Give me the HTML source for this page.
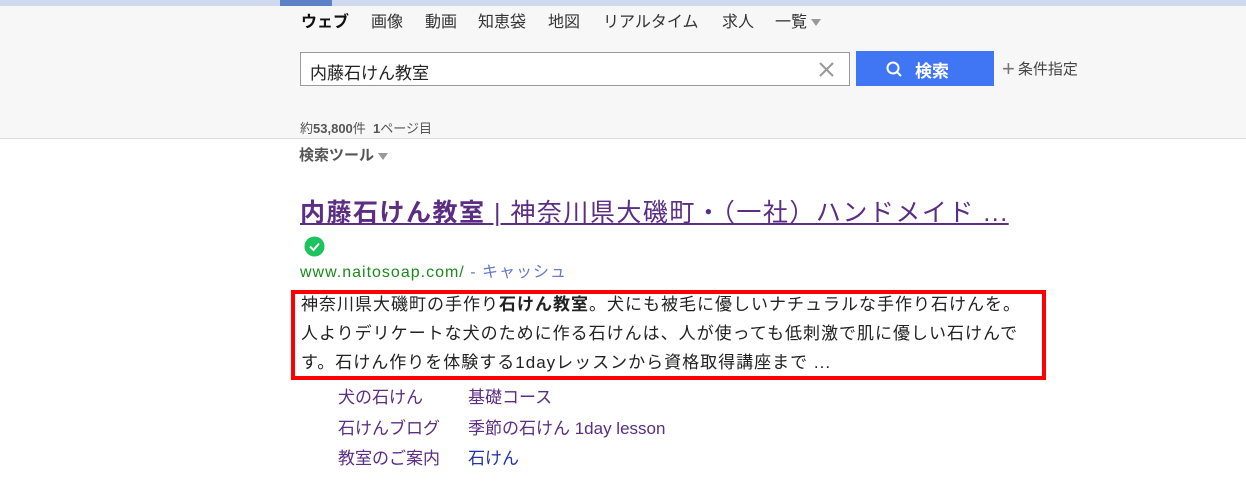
<!DOCTYPE html>
<html><head><meta charset="utf-8"><style>
*{margin:0;padding:0;box-sizing:border-box}
body{width:1246px;height:492px;background:#fff;font-family:"Liberation Sans","Noto Sans CJK JP",sans-serif;position:relative;overflow:hidden;color:#333}
.a{position:absolute;white-space:nowrap}
#top{position:absolute;left:0;top:0;width:1246px;height:6px;background:#cfdaee}
#top i{position:absolute;left:280px;top:0;width:52px;height:6px;background:#5d82c8}
#hd{position:absolute;left:0;top:6px;width:1246px;height:133px;background:#f7f7f7;border-bottom:1px solid #dcdcdc}
.nav{top:2px;font-size:16px;color:#333}
.tri{display:inline-block;width:0;height:0;border-left:5px solid transparent;border-right:5px solid transparent;border-top:7px solid #999;vertical-align:middle;margin-left:4px}
#box{position:absolute;left:300px;top:52px;width:550px;height:34px;border:1px solid #999;background:#fff}
#btn{position:absolute;left:856px;top:51px;width:138px;height:35px;background:#4076f4;color:#fff;font-weight:bold;font-size:17px}
a{color:#5b2d83}
</style></head><body>
<div id="top"><i></i></div>
<div id="hd">
<div class="a nav" style="left:301px;font-weight:bold;color:#111">ウェブ</div>
<div class="a nav" style="left:371px">画像</div>
<div class="a nav" style="left:425px">動画</div>
<div class="a nav" style="left:478px">知恵袋</div>
<div class="a nav" style="left:548px">地図</div>
<div class="a nav" style="left:603px">リアルタイム</div>
<div class="a nav" style="left:722px">求人</div>
<div class="a nav" style="left:775px">一覧<span class="tri"></span></div>
</div>
<div id="box"><div class="a" style="left:9px;top:6px;font-size:17px;color:#222">内藤石けん教室</div>
<svg class="a" style="left:518px;top:9px" width="15" height="15"><path d="M1 1L14 14M14 1L1 14" stroke="#999" stroke-width="2"/></svg></div>
<div id="btn"><svg class="a" style="left:30px;top:10px" width="16" height="16"><circle cx="7" cy="7" r="5.5" fill="none" stroke="#fff" stroke-width="2"/><path d="M11 11L15 15" stroke="#fff" stroke-width="2"/></svg><div class="a" style="left:59px;top:6px">検索</div></div>
<div class="a" style="left:1002px;top:56px;font-size:15px;color:#444"><span style="font-size:22px;color:#777;vertical-align:-2px;margin-right:3px">+</span>条件指定</div>
<div class="a" style="left:300px;top:118px;font-size:13px;color:#555">約<b>53,800</b>件 &nbsp;<b>1</b>ページ目</div>
<div class="a" style="left:299px;top:144px;font-size:15px;font-weight:bold;color:#555">検索ツール<span class="tri"></span></div>
<div class="a" style="left:300px;top:193px;font-size:25px;letter-spacing:1.5px;color:#5b2d83;text-decoration:underline"><b>内藤石けん教室</b> | 神奈川県大磯町・（一社）ハンドメイド ...</div>
<svg class="a" style="left:304px;top:236px" width="21" height="21"><circle cx="10.5" cy="10.5" r="10" fill="#1bc45c"/><path d="M6 10.5L9.5 14L15 7.5" stroke="#fff" stroke-width="2" fill="none"/></svg>
<div class="a" style="left:300px;top:258px;font-size:16px;letter-spacing:1px;color:#1a8a1a">www.naitosoap.com/ <span style="color:#6677cc">- キャッシュ</span></div>
<div class="a" style="left:291px;top:290px;width:755px;height:90px;border:4px solid #f00"></div>
<div class="a" style="left:301px;top:290px;font-size:17px;letter-spacing:1px;line-height:29px;color:#222">神奈川県大磯町の手作り<b>石けん教室</b>。犬にも被毛に優しいナチュラルな手作り石けんを。<br>人よりデリケートな犬のために作る石けんは、人が使っても低刺激で肌に優しい石けんで<br>す。石けん作りを体験する1dayレッスンから資格取得講座まで ...</div>
<div class="a" style="left:338px;top:383px;font-size:17px;line-height:30.5px"><a>犬の石けん</a><br><a>石けんブログ</a><br><a>教室のご案内</a></div>
<div class="a" style="left:468px;top:383px;font-size:17px;line-height:30.5px"><a>基礎コース</a><br><a>季節の石けん 1day lesson</a><br><a style="color:#2233aa">石けん</a></div>
</body></html>
